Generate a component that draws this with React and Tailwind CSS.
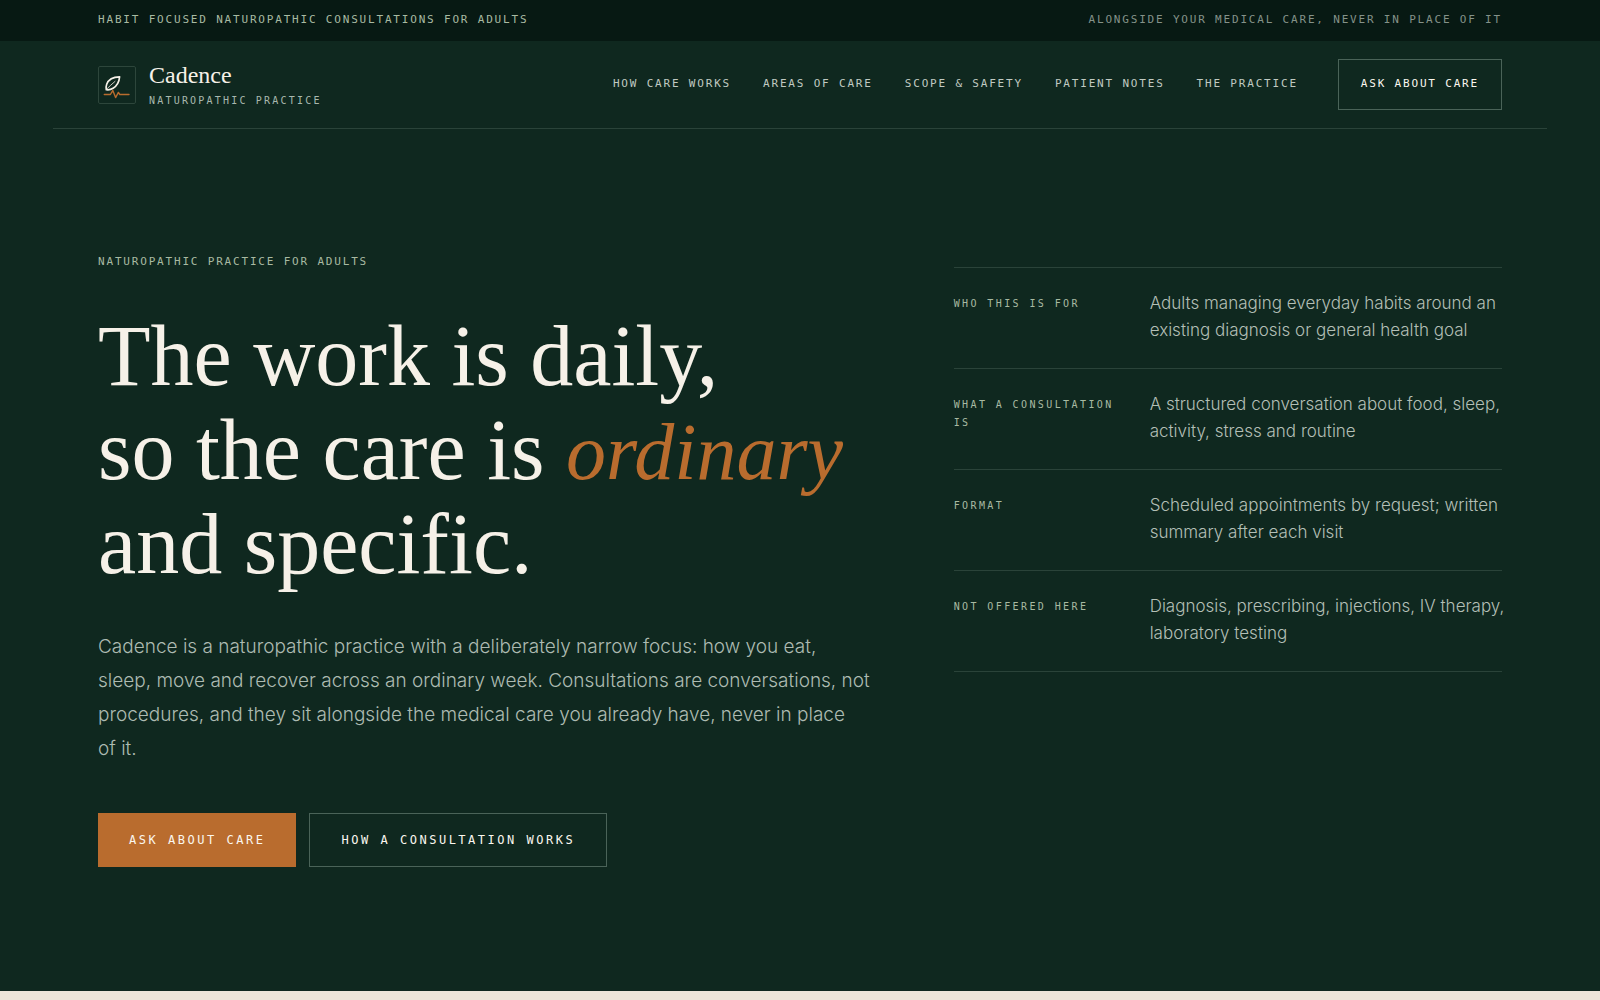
import React from 'react';

const navLinks = [
  { label: 'How care works', href: '#how-care-works' },
  { label: 'Areas of care', href: '#areas-of-care' },
  { label: 'Scope & safety', href: '#scope-safety' },
  { label: 'Patient notes', href: '#patient-notes' },
  { label: 'The practice', href: '#the-practice' },
];

const facts = [
  {
    term: 'Who this is for',
    detail: 'Adults managing everyday habits around an existing diagnosis or general health goal',
  },
  {
    term: 'What a consultation is',
    detail: 'A structured conversation about food, sleep, activity, stress and routine',
  },
  {
    term: 'Format',
    detail: 'Scheduled appointments by request; written summary after each visit',
  },
  {
    term: 'Not offered here',
    detail: 'Diagnosis, prescribing, injections, IV therapy, laboratory testing',
  },
];

const LogoMark = () => (
  <svg viewBox="0 0 38 38" className="w-[38px] h-[38px] shrink-0" fill="none" aria-hidden="true">
    <rect x="0.5" y="0.5" width="37" height="37" rx="1.5" stroke="#2d463b" />
    <path
      d="M21.6 10.8C15.5 10.9 10.4 13.6 8.7 18.2C8 20.2 7.8 22 8.3 23.7C10.4 24 13 23.6 15.1 22.3C19.2 19.8 21.2 15.6 21.6 10.8Z"
      stroke="#f6f1e8"
      strokeWidth="1.7"
      strokeLinejoin="round"
    />
    <path d="M9 22.8C11.5 20.4 14 17.8 17 15.4" stroke="#f6f1e8" strokeWidth="0.8" strokeLinecap="round" />
    <path
      d="M6.3 28.5H12.4L14.8 24.4L17.6 31.6L20.4 26.4L21.8 28.5H31"
      stroke="#b96c2e"
      strokeWidth="1.4"
      strokeLinejoin="round"
      strokeLinecap="round"
    />
  </svg>
);

const TopBar = () => (
  <div className="bg-[#071913]">
    <div className="max-w-[1494px] mx-auto px-[45px] h-[41px] flex items-center justify-between font-['DejaVu_Sans_Mono',monospace] text-[11px] tracking-[0.165em] uppercase">
      <p className="text-[#a8baa2]">Habit focused naturopathic consultations for adults</p>
      <p className="text-[#849289]">Alongside your medical care, never in place of it</p>
    </div>
  </div>
);

const Header = () => (
  <header className="max-w-[1494px] w-full mx-auto px-[45px] h-[88px] flex items-center justify-between border-b border-[#2a4339]">
    <a href="#top" className="flex items-center gap-[13px]">
      <LogoMark />
      <span className="flex flex-col pt-0.5">
        <span className="font-['Liberation_Serif',serif] text-2xl leading-[30px] text-[#f6f1e8]">Cadence</span>
        <span className="font-['DejaVu_Sans_Mono',monospace] text-[10px] leading-[22px] tracking-[0.22em] uppercase text-[#a8b8ae]">
          Naturopathic practice
        </span>
      </span>
    </a>

    <nav className="flex items-center gap-8 font-['DejaVu_Sans_Mono',monospace] text-[11px] tracking-[0.165em] uppercase">
      {navLinks.map((link) => (
        <a key={link.href} href={link.href} className="text-[#c0cac2]">
          {link.label}
        </a>
      ))}
      <a
        href="#ask"
        className="ml-2 h-[51px] px-[22px] flex items-center border border-[#4a6358] text-[#fbf7ef]"
      >
        Ask about care
      </a>
    </nav>
  </header>
);

const Hero = () => (
  <section className="max-w-[1494px] w-full mx-auto px-[45px] py-[124px] grid grid-cols-[7fr_5fr] gap-[88px]">
    <div className="min-w-0">
      <p className="font-['DejaVu_Sans_Mono',monospace] text-[11px] leading-[18px] tracking-[0.165em] uppercase text-[#a8baa2]">
        Naturopathic practice for adults
      </p>

      <h1 className="mt-[38px] font-['Liberation_Serif',serif] text-[86px] leading-[94px] text-[#f6f1e8] whitespace-nowrap">
        The work is daily,
        <br />
        so the care is <em className="text-[80px] leading-none text-[#b96c2e]">ordinary</em>
        <br />
        and specific.
      </h1>

      <p className="mt-[39px] font-['Inter',sans-serif] font-light text-[19px] leading-[34px] text-[#adbbb2] xl:whitespace-nowrap">
        Cadence is a naturopathic practice with a deliberately narrow focus: how you eat,
        <br className="hidden xl:inline" /> sleep, move and recover across an ordinary week. Consultations are
        conversations, not
        <br className="hidden xl:inline" /> procedures, and they sit alongside the medical care you already have,
        never in place
        <br className="hidden xl:inline" /> of it.
      </p>

      <div className="mt-[47px] flex gap-[13px] font-['DejaVu_Sans_Mono',monospace] text-xs tracking-[0.21em] uppercase text-[#fbf7ef]">
        <a href="#ask" className="h-[54px] px-[30px] flex items-center border border-[#b96c2e] bg-[#b96c2e]">
          Ask about care
        </a>
        <a href="#how-care-works" className="h-[54px] px-[31px] flex items-center border border-[#4a6358]">
          How a consultation works
        </a>
      </div>
    </div>

    <dl className="mt-[14px] self-start border-t border-[#2a4339]">
      {facts.map((fact) => (
        <div
          key={fact.term}
          className="grid grid-cols-[172px_1fr] gap-6 pt-[22px] pb-6 border-b border-[#2a4339]"
        >
          <dt className="pt-[5px] font-['DejaVu_Sans_Mono',monospace] text-[10px] leading-[18px] tracking-[0.24em] uppercase text-[#a8baa2]">
            {fact.term}
          </dt>
          <dd className="-mr-2 font-['Inter',sans-serif] font-light text-[17px] leading-[27px] text-[#b3bfb6]">
            {fact.detail}
          </dd>
        </div>
      ))}
    </dl>
  </section>
);

const App = () => {
  return (
    <div id="top" className="min-h-screen flex flex-col bg-[#ede6d9]">
      <div className="bg-[#0f281f]">
        <TopBar />
        <Header />
        <Hero />
      </div>
    </div>
  );
};

export default App;
